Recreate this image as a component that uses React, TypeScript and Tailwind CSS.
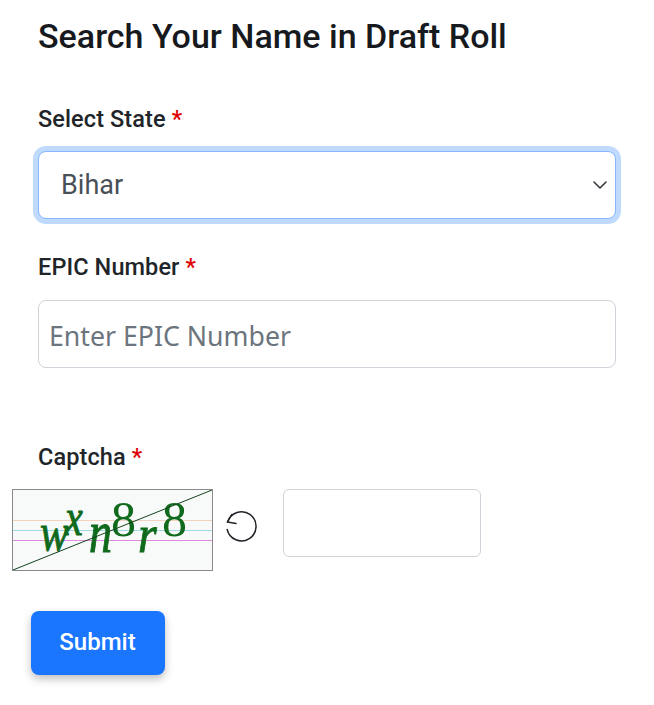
function Label({ text }: { text: string }) {
  return (
    <label className="block text-[23.5px] leading-[34px] font-medium tracking-[0.1px] text-[#212529]">
      {text} <span className="text-[#e00000]">*</span>
    </label>
  );
}

function Letter({ x, y, sy, size, italic, children }: { x: number; y: number; sy: number; size: number; italic?: boolean; children: string }) {
  return (
    <text
      transform={`translate(${x} ${y}) scale(1 ${sy})`}
      fontSize={size}
      fontStyle={italic ? "italic" : "normal"}
      stroke={italic ? "#0f6a1c" : "none"}
      strokeWidth={italic ? 0.8 : 0}
    >
      {children}
    </text>
  );
}

function Captcha() {
  return (
    <svg width="201" height="82" viewBox="0 0 199 80" className="block shrink-0 border border-[#8a8a8a] bg-[#f8f9f9]">
      <line x1="0" y1="30.5" x2="199" y2="30.5" stroke="#f3d3c0" strokeWidth="1" />
      <line x1="0" y1="40.5" x2="199" y2="40.5" stroke="#9edbe3" strokeWidth="1" />
      <line x1="0" y1="50.5" x2="199" y2="50.5" stroke="#e08ae0" strokeWidth="1" />
      <g fill="#0f6a1c" fontFamily="'Liberation Serif', serif">
        <Letter x={27} y={60} sy={1.24} size={43} italic>w</Letter>
        <Letter x={52} y={45} sy={1.3} size={40} italic>x</Letter>
        <Letter x={76} y={62} sy={1.3} size={46} italic>n</Letter>
        <Letter x={98} y={46} sy={1} size={50}>8</Letter>
        <Letter x={125} y={62} sy={1.1} size={48} italic>r</Letter>
        <Letter x={149} y={46} sy={1} size={50}>8</Letter>
      </g>
      <line x1="0" y1="80" x2="199" y2="0" stroke="#14431c" strokeWidth="1" />
    </svg>
  );
}

export default function App() {
  return (
    <div className="min-h-[705px] w-[654px] bg-white pl-[38px] pr-[38px] pt-[14px] font-['Roboto',sans-serif]">
      <h1 className="text-[34px] leading-[44px] font-medium text-[#16191d]">Search Your Name in Draft Roll</h1>

      <div className="mt-[44px]">
        <Label text="Select State" />
      </div>
      <div className="mt-[15px] flex h-[68px] items-center justify-between rounded-[8px] border border-[#86b7fe] bg-white pl-[22px] pr-[7px] shadow-[0_0_0_5px_#bfdafd]">
        <span className="text-[27px] text-[#495057]">Bihar</span>
        <svg width="16" height="16" viewBox="0 0 16 16" fill="none" stroke="#343a40" strokeWidth="1.6" strokeLinecap="round" strokeLinejoin="round">
          <path d="M2 5l6 6 6-6" />
        </svg>
      </div>

      <div className="mt-[31px]">
        <Label text="EPIC Number" />
      </div>
      <input
        placeholder="Enter EPIC Number"
        className="mt-[16px] block h-[68px] w-full rounded-[8px] border border-[#ced4da] px-[10px] pt-[3px] font-['Noto_Sans',sans-serif] text-[26.7px] text-[#495057] placeholder:text-[#6c757d]"
      />

      <div className="mt-[72px]">
        <Label text="Captcha" />
      </div>
      <div className="mt-[15px] -ml-[26px] flex items-start">
        <Captcha />
        <svg width="36" height="36" viewBox="0 0 36 36" fill="none" stroke="#212529" strokeWidth="1.5" strokeLinecap="round" strokeLinejoin="round" className="mt-[21px] ml-[11px] shrink-0">
          <path d="M3.2 19.5A14.6 14.6 0 1 0 3.5 12" />
          <path d="M7.7 4.5L3.5 12l8.5 1.5" />
        </svg>
        <input className="ml-[23px] block h-[68px] w-[198px] rounded-[6px] border border-[#ced4da]" />
      </div>

      <button className="mt-[40px] -ml-[7px] block h-[64px] w-[134px] rounded-[8px] bg-[#1a76ff] pb-[2px] pr-[1px] text-[24px] font-medium text-white shadow-[0_4px_8px_rgba(0,0,0,0.25)]">
        Submit
      </button>
    </div>
  );
}
